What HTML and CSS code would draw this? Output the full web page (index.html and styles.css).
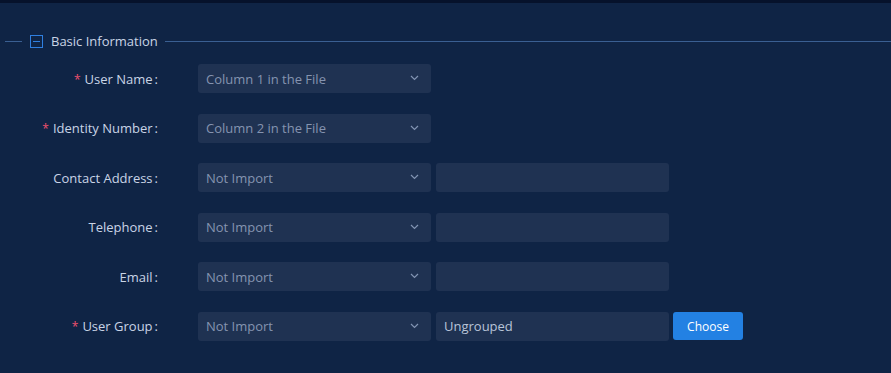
FILE: index.html
```html
<!DOCTYPE html>
<html lang="en">
    <head>
        <meta charset="UTF-8">
        <title>Import Users</title>
        <link rel="stylesheet" href="styles.css">
    </head>
    <body>
        <div class="top-bar"></div>
        <div class="panel">
            <div class="legend">
                <span class="legend-line short"></span>
                <svg class="collapse-icon" width="13" height="13" viewBox="0 0 13 13">
                    <rect x="0.5" y="0.5" width="12" height="12" fill="none" stroke="#2f7fe0" stroke-width="1"/>
                    <line x1="3" y1="6.5" x2="10" y2="6.5" stroke="#2f7fe0" stroke-width="1"/>
                </svg>
                <span class="legend-title">Basic Information</span>
                <span class="legend-line"></span>
            </div>
            <div class="form">
                <div class="row">
                    <label class="label"><span class="req">*</span>User Name<span class="colon">:</span></label>
                    <div class="select">Column 1 in the File<svg class="chev" width="9" height="6" viewBox="0 0 9 6"><path d="M1 1l3.5 3.5L8 1" fill="none" stroke="#8294b3" stroke-width="1.2"/></svg></div>
                </div>
                <div class="row">
                    <label class="label"><span class="req">*</span>Identity Number<span class="colon">:</span></label>
                    <div class="select">Column 2 in the File<svg class="chev" width="9" height="6" viewBox="0 0 9 6"><path d="M1 1l3.5 3.5L8 1" fill="none" stroke="#8294b3" stroke-width="1.2"/></svg></div>
                </div>
                <div class="row">
                    <label class="label">Contact Address<span class="colon">:</span></label>
                    <div class="select">Not Import<svg class="chev" width="9" height="6" viewBox="0 0 9 6"><path d="M1 1l3.5 3.5L8 1" fill="none" stroke="#8294b3" stroke-width="1.2"/></svg></div>
                    <div class="input"></div>
                </div>
                <div class="row">
                    <label class="label">Telephone<span class="colon">:</span></label>
                    <div class="select">Not Import<svg class="chev" width="9" height="6" viewBox="0 0 9 6"><path d="M1 1l3.5 3.5L8 1" fill="none" stroke="#8294b3" stroke-width="1.2"/></svg></div>
                    <div class="input"></div>
                </div>
                <div class="row">
                    <label class="label">Email<span class="colon">:</span></label>
                    <div class="select">Not Import<svg class="chev" width="9" height="6" viewBox="0 0 9 6"><path d="M1 1l3.5 3.5L8 1" fill="none" stroke="#8294b3" stroke-width="1.2"/></svg></div>
                    <div class="input"></div>
                </div>
                <div class="row">
                    <label class="label"><span class="req">*</span>User Group<span class="colon">:</span></label>
                    <div class="select">Not Import<svg class="chev" width="9" height="6" viewBox="0 0 9 6"><path d="M1 1l3.5 3.5L8 1" fill="none" stroke="#8294b3" stroke-width="1.2"/></svg></div>
                    <div class="input filled">Ungrouped</div>
                    <button class="btn">Choose</button>
                </div>
            </div>
        </div>
    </body>
</html>
```

FILE: styles.css
```css
body {
    margin: 0;
    height: 373px;
    overflow: hidden;
    background: #0f2445;
    font-family: 'Open Sans', 'Noto Sans', Arial, sans-serif;
    color: #c9d4e6;
}
.top-bar {
    height: 3px;
    background: #06122b;
}
.panel {
    padding: 31px 0 0 5px;
}
.legend {
    display: flex;
    align-items: center;
    height: 14px;
}
.legend-line {
    flex: 1;
    height: 1px;
    background: #3a5f92;
}
.legend-line.short {
    flex: none;
    width: 17px;
}
.collapse-icon {
    margin: 0 8px 0 8px;
    display: block;
}
.legend-title {
    font-size: 13px;
    color: #c9d4e6;
    margin-right: 7px;
    white-space: nowrap;
}
.form {
    display: flex;
    flex-direction: column;
    gap: 20.6px;
    margin-top: 16px;
    margin-left: -5px;
}
.row {
    display: flex;
    align-items: center;
    height: 29px;
}
.label {
    width: 158px;
    text-align: right;
    font-size: 13px;
    color: #c9d4e6;
    margin-right: 40px;
    white-space: nowrap;
}
.req {
    color: #f0506e;
    margin-right: 4px;
    font-size: 12px;
}
.colon {
    margin-left: 2px;
}
.select {
    width: 233px;
    height: 29px;
    box-sizing: border-box;
    background: #1f3252;
    border-radius: 3px;
    padding: 0 12px 0 8px;
    display: flex;
    align-items: center;
    justify-content: space-between;
    font-size: 13px;
    color: #8594b0;
}
.chev {
    display: block;
    margin-top: -1px;
}
.input {
    width: 233px;
    height: 29px;
    box-sizing: border-box;
    background: #1f3252;
    border-radius: 3px;
    margin-left: 5px;
    padding: 0 8px;
    display: flex;
    align-items: center;
    font-size: 13px;
}
.input.filled {
    color: #b8c4d8;
}
.btn {
    margin-left: 4px;
    width: 70px;
    height: 28px;
    border: none;
    border-radius: 3px;
    background: #2381e3;
    color: #fff;
    font-family: inherit;
    font-size: 12px;
    cursor: pointer;
}
```
